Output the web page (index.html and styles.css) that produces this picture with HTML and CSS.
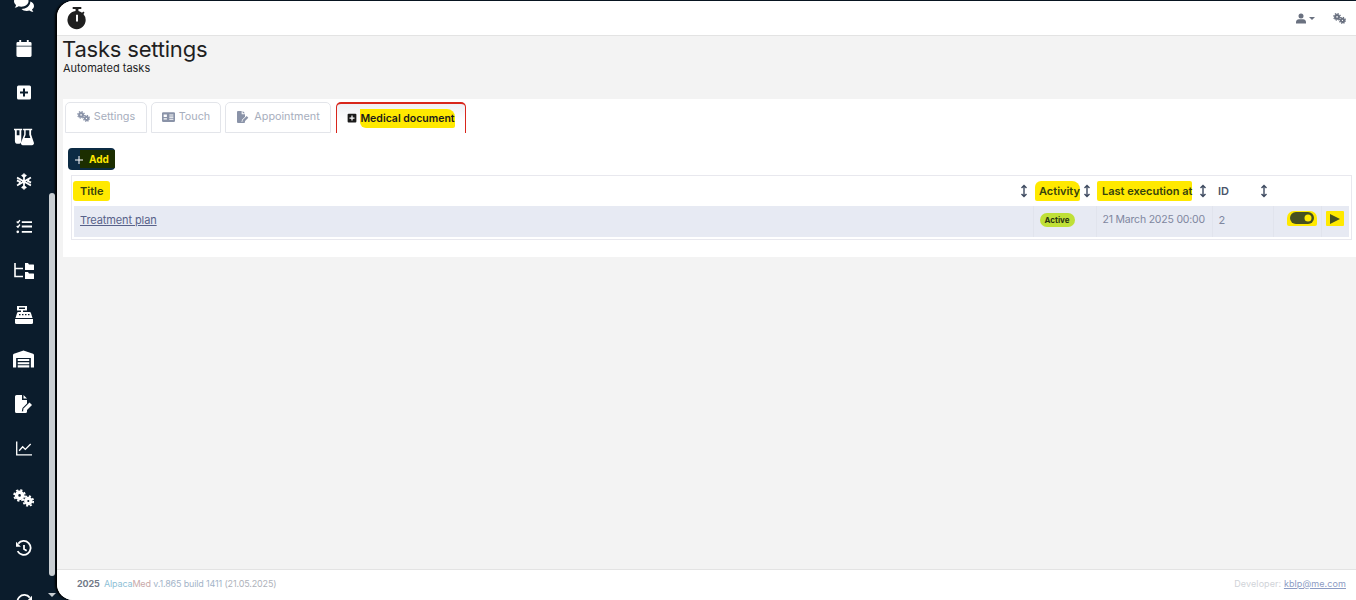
FILE: index.html
```html
<!DOCTYPE html>
<html>
<head>
    <title>Tasks settings</title>
    <link rel="stylesheet" href="styles.css">
</head>
<body>
    <svg class="icon-defs" width="0" height="0">
        <defs>
            <symbol id="i-cogs" viewBox="0 0 24 20">
                <circle cx="7.5" cy="7" r="3.5" fill="none" stroke="currentColor" stroke-width="4"/>
                <circle cx="7.5" cy="7" r="6.2" fill="none" stroke="currentColor" stroke-width="2" stroke-dasharray="2.6 2.27"/>
                <circle cx="17.5" cy="13.5" r="3" fill="none" stroke="currentColor" stroke-width="3.6"/>
                <circle cx="17.5" cy="13.5" r="5.6" fill="none" stroke="currentColor" stroke-width="2" stroke-dasharray="2.4 2"/>
            </symbol>
            <symbol id="i-plus-square" viewBox="0 0 16 16">
                <path fill="currentColor" fill-rule="evenodd" d="M2.500 1h11A1.500 1.500 0 0 1 15 2.500v11a1.500 1.500 0 0 1-1.500 1.500h-11A1.500 1.500 0 0 1 1 13.500v-11A1.500 1.500 0 0 1 2.500 1zM7 4v3H4v2h3v3h2V9h3V7H9V4z"/>
            </symbol>
            <symbol id="i-file-sign" viewBox="0 0 20 18">
                <path fill="currentColor" d="M1 1.500A1.500 1.500 0 0 1 2.500 0H8v5h5v3.500L8.500 13l-.7 3.500 3.500-.7L13 14.200v2.300a1.500 1.500 0 0 1-1.500 1.500h-9A1.500 1.500 0 0 1 1 16.500zM9.500 0 13 3.500H9.500z"/>
                <path fill="currentColor" d="M15.500 7.500l2.500 2.500-6 6-3 .5.500-3z"/>
            </symbol>
            <symbol id="i-sort" viewBox="0 0 8 14">
                <path fill="none" stroke="currentColor" stroke-width="1.400" d="M4 1.500v11M1.500 4 4 1.500 6.500 4M1.500 10 4 12.500 6.500 10"/>
            </symbol>
        </defs>
    </svg>

    <div class="sidebar">
        <div class="side-list">
            <div class="side-item">
                <svg class="side-icon side-icon-wide" viewBox="0 0 22 18"><path fill="currentColor" d="M8 0c4.400 0 8 2.700 8 6s-3.600 6-8 6c-1 0-2-.1-2.900-.4C4 12.500 2.500 13 .8 13c.7-.8 1.300-1.800 1.500-2.900C.9 9 0 7.600 0 6c0-3.300 3.600-6 8-6z"/><path fill="currentColor" d="M18 6.200c2.400.9 4 2.800 4 4.900 0 1.500-.8 2.800-2.200 3.800.2 1 .8 2 1.500 2.700-1.700 0-3.200-.5-4.300-1.400-.9.300-1.900.4-3 .4-2.400 0-4.500-.9-5.800-2.200 5.200 0 9.800-3.200 9.800-8.200z"/></svg>
            </div>
            <div class="side-item">
                <svg class="side-icon" viewBox="0 0 16 18"><path fill="currentColor" d="M3 0h2v2h6V0h2v2h1.500A1.500 1.500 0 0 1 16 3.500V6H0V3.500A1.500 1.500 0 0 1 1.500 2H3zM0 7h16v9.500a1.500 1.500 0 0 1-1.500 1.500h-13A1.500 1.500 0 0 1 0 16.500z"/></svg>
            </div>
            <div class="side-item">
                <svg class="side-icon" viewBox="0 0 16 16"><use href="#i-plus-square"/></svg>
            </div>
            <div class="side-item">
                <svg class="side-icon side-icon-wide" viewBox="0 0 22 18"><path fill="currentColor" d="M0 0h9v1.500H8V13a3.500 3.500 0 0 1-3.500 3.500A3.500 3.500 0 0 1 1 13V1.500H0zM3 1.500V7h3V1.500z" fill-rule="evenodd"/><path fill="currentColor" fill-rule="evenodd" d="M10 0h10v1.500h-1.200v4.700l3 8.800a2.200 2.200 0 0 1-2 3H9.700a2.200 2.200 0 0 1-2-3l3.500-8.800V1.500H10zM12.800 1.500v5l-1.300 3.500h6.500l-1.200-3.500v-5z"/></svg>
            </div>
            <div class="side-item">
                <svg class="side-icon" viewBox="0 0 18 18"><path fill="none" stroke="currentColor" stroke-width="2" d="M9 0v18M1.200 4.500l15.600 9M1.200 13.500l15.600-9M6.500 1.500 9 4l2.500-2.500M6.500 16.500 9 14l2.500 2.500M1 8l3.400 1L3.500 12.500M17 10l-3.400-1 .9-3.500M1.500 5.500l3 .5M16.500 12.500l-3-.5"/></svg>
            </div>
            <div class="side-item">
                <svg class="side-icon" viewBox="0 0 18 16"><path fill="none" stroke="currentColor" stroke-width="1.600" d="M.8 2.400l1.400 1.300L4.400.8M.8 7.400l1.400 1.300 2.200-2.900"/><circle fill="currentColor" cx="2" cy="14" r="1.500"/><path fill="none" stroke="currentColor" stroke-width="2" d="M6.500 3H18M6.500 8H18M6.500 14H18"/></svg>
            </div>
            <div class="side-item">
                <svg class="side-icon side-icon-wide" viewBox="0 0 20 16"><path fill="none" stroke="currentColor" stroke-width="1.600" d="M1 0v13.500h8M1 5.500h8"/><path fill="currentColor" d="M11 0h3l1 1.500h4.500a.5.500 0 0 1 .5.500v4.500a.5.500 0 0 1-.5.500h-8.500zM11 9h3l1 1.500h4.500a.5.500 0 0 1 .5.500v4.500a.5.500 0 0 1-.5.500h-8.500z"/></svg>
            </div>
            <div class="side-item">
                <svg class="side-icon side-icon-wide" viewBox="0 0 20 18"><path fill="currentColor" fill-rule="evenodd" d="M3 0h10v4.500H9V6h6.500a1.500 1.500 0 0 1 1.500 1.300L18.500 12H1.500L3 7.300A1.500 1.500 0 0 1 4.500 6H7V4.500H3zM5 1.500V3h6V1.500zM5 8v1.200h1.500V8zM8 8v1.200h1.500V8zM11 8v1.200h1.500V8zM14 8v1.200h1.500V8z"/><path fill="currentColor" d="M1 13h18v3.500a1.500 1.500 0 0 1-1.500 1.500h-15A1.500 1.500 0 0 1 1 16.500z"/></svg>
            </div>
            <div class="side-item">
                <svg class="side-icon side-icon-wider" viewBox="0 0 20 16"><path fill="currentColor" fill-rule="evenodd" d="M0 16V4.500a1.500 1.500 0 0 1 .9-1.400L10 0l9.100 3.100A1.500 1.500 0 0 1 20 4.500V16h-3V7H3v9zM4.500 8h11v2h-11zM4.500 11h11v2h-11zM4.500 14h11v2h-11z"/></svg>
            </div>
            <div class="side-item">
                <svg class="side-icon side-icon-wide" viewBox="0 0 20 18"><use href="#i-file-sign"/></svg>
            </div>
            <div class="side-item">
                <svg class="side-icon" viewBox="0 0 18 16"><path fill="none" stroke="currentColor" stroke-width="1.500" d="M.8 0v15.200H18M3.500 10.500 7.500 6l3 3L16.500 3"/></svg>
            </div>
            <div class="side-item side-item-gap">
                <svg class="side-icon side-icon-wider" viewBox="0 0 24 20"><use href="#i-cogs"/></svg>
            </div>
            <div class="side-item side-item-gap">
                <svg class="side-icon" viewBox="0 0 18 18"><path fill="none" stroke="currentColor" stroke-width="2" d="M2.500 3.500A7.800 7.800 0 1 1 1.800 12M9 5v4.500l3 2"/><path fill="currentColor" d="M0 1.500 5.500 7H0z"/></svg>
            </div>
            <div class="side-item side-item-last">
                <svg class="side-icon" viewBox="0 0 18 18"><path fill="none" stroke="currentColor" stroke-width="2" d="M15.500 3.500A7.800 7.800 0 1 0 16.200 12"/><path fill="currentColor" d="M18 1.500 12.500 7H18z"/></svg>
            </div>
        </div>
        <div class="side-thumb"></div>
        <div class="side-arrow"></div>
    </div>

    <div class="main">
        <div class="topbar">
            <svg class="logo" viewBox="0 0 20 24"><path fill="#1f1f1f" fill-rule="evenodd" d="M5.500 0h9v2H11.500v2.100a9.500 9.500 0 0 1 3.800 1.800l1.200-1.200 1.400 1.400-1.200 1.200A9.500 9.500 0 1 1 8.500 4.100V2h-3zM9 8v7h2V8z"/></svg>
            <div class="topbar-tools">
                <span class="tool">
                    <svg class="tool-user" viewBox="0 0 14 14"><circle fill="currentColor" cx="7" cy="3.500" r="3.500"/><path fill="currentColor" d="M0 14v-2c0-2.500 2-4 4-4h6c2 0 4 1.500 4 4v2z"/></svg>
                    <span class="caret"></span>
                </span>
                <svg class="tool-cogs" viewBox="0 0 24 20"><use href="#i-cogs"/></svg>
            </div>
        </div>

        <div class="content">
            <div class="page-head">
                <h1 class="page-title">Tasks settings</h1>
                <div class="page-sub">Automated tasks</div>
            </div>

            <div class="card">
                <div class="tabs">
                    <div class="tab tab-settings">
                        <svg class="tab-icon tab-icon-cogs" viewBox="0 0 24 20"><use href="#i-cogs"/></svg>Settings
                    </div>
                    <div class="tab tab-touch">
                        <svg class="tab-icon" viewBox="0 0 16 12"><path fill="currentColor" fill-rule="evenodd" d="M1.500 0h13A1.500 1.500 0 0 1 16 1.500v9a1.500 1.500 0 0 1-1.500 1.500h-13A1.500 1.500 0 0 1 0 10.500v-9A1.500 1.500 0 0 1 1.500 0zM2 3v3h4V3zM2 7.500V9h4V7.500zM9 3v1.300h5V3zM9 5.500v1.300h5V5.500zM9 8v1.300h5V8z"/></svg>Touch
                    </div>
                    <div class="tab tab-appointment">
                        <svg class="tab-icon tab-icon-file" viewBox="0 0 20 18"><use href="#i-file-sign"/></svg>Appointment
                    </div>
                    <div class="tab tab-active">
                        <svg class="tab-icon tab-icon-plus" viewBox="0 0 16 16"><use href="#i-plus-square"/></svg><span class="mark mark-tab">Medical document</span>
                    </div>
                </div>

                <div class="add-row">
                    <button class="add-button">
                        <svg class="add-plus" viewBox="0 0 8 8"><path fill="none" stroke="#fff" stroke-width="1" d="M4 0v8M0 4h8"/></svg>
                        <span class="add-label">Add</span>
                    </button>
                </div>

                <div class="table-wrap">
                    <table class="tasks">
                        <colgroup>
                            <col class="col-title">
                            <col class="col-activity">
                            <col class="col-date">
                            <col class="col-id">
                            <col class="col-toggle">
                            <col class="col-run">
                        </colgroup>
                        <thead>
                            <tr>
                                <th><span class="mark mark-title">Title</span><svg class="sort" viewBox="0 0 8 14"><use href="#i-sort"/></svg></th>
                                <th><span class="mark mark-activity">Activity</span><svg class="sort" viewBox="0 0 8 14"><use href="#i-sort"/></svg></th>
                                <th><span class="mark mark-date">Last execution at</span><svg class="sort" viewBox="0 0 8 14"><use href="#i-sort"/></svg></th>
                                <th class="th-plain">ID<svg class="sort" viewBox="0 0 8 14"><use href="#i-sort"/></svg></th>
                                <th></th>
                                <th></th>
                            </tr>
                        </thead>
                        <tbody>
                            <tr>
                                <td><a class="task-link" href="#">Treatment plan</a></td>
                                <td><span class="badge">Active</span></td>
                                <td class="td-date">21 March 2025 00:00</td>
                                <td>2</td>
                                <td class="td-action">
                                    <span class="mark-icon">
                                        <svg class="toggle" viewBox="0 0 24 12"><rect width="24" height="12" rx="6" fill="#465020"/><circle cx="18" cy="6" r="3.500" fill="#ffe900"/></svg>
                                    </span>
                                </td>
                                <td class="td-action">
                                    <span class="mark-icon mark-run">
                                        <svg class="run" viewBox="0 0 10 10"><path fill="#465020" d="M0 0l10 5-10 5z"/></svg>
                                    </span>
                                </td>
                            </tr>
                        </tbody>
                    </table>
                </div>
            </div>
        </div>

        <div class="footer">
            <div>
                <span class="foot-year">2025</span>
                <span class="foot-alpaca">Alpaca</span><span class="foot-med">Med</span>
                <span class="foot-version">v.1.865 build 1411</span>
                <span class="foot-date">(21.05.2025)</span>
            </div>
            <div class="foot-dev">Developer: <a class="foot-mail" href="#">kblp@me.com</a></div>
        </div>
    </div>
</body>
</html>
```

FILE: styles.css
```css
html,
body {
    height: 100%;
}

body {
    margin: 0;
    display: flex;
    overflow: hidden;
    background: #0b1c2c;
    font-family: Inter, "Liberation Sans", sans-serif;
    font-size: 11px;
    color: #1f1f1f;
}

.icon-defs {
    position: absolute;
}

/* left menu */
.sidebar {
    position: relative;
    width: 57px;
    flex: none;
    overflow: hidden;
}

.side-list {
    margin-top: -18px;
    padding-right: 10px;
    color: #fff;
}

.side-item {
    height: 44.4px;
    display: flex;
    align-items: center;
    justify-content: center;
}

.side-item-gap {
    margin-top: 6px;
}

.side-item-last {
    margin-top: 9px;
}

.side-icon {
    width: 16px;
    height: 17px;
}

.side-icon-wide {
    width: 20px;
    height: 18px;
}

.side-icon-wider {
    width: 21px;
    height: 18px;
}

.side-thumb {
    position: absolute;
    left: 49px;
    top: 193px;
    width: 6px;
    height: 383px;
    border-radius: 3px;
    background: #c9ced2;
}

.side-arrow {
    position: absolute;
    left: 48px;
    top: 593px;
    border-left: 4px solid transparent;
    border-right: 4px solid transparent;
    border-top: 4px solid #c9ced2;
}

/* main column */
.main {
    flex: 1;
    min-width: 0;
    margin-top: 1px;
    display: flex;
    flex-direction: column;
    background: #f3f3f3;
    border-radius: 16px 0 0 16px;
    overflow: hidden;
    box-shadow: -2px 0 2px #000;
}

.topbar {
    height: 34px;
    flex: none;
    display: flex;
    align-items: center;
    justify-content: space-between;
    padding: 0 10px 0 10px;
    background: #fff;
    border-bottom: 1px solid #e3e3e3;
}

.logo {
    width: 20px;
    height: 23px;
}

.topbar-tools {
    display: flex;
    align-items: center;
    gap: 18px;
    color: #6a7180;
}

.tool {
    display: flex;
    align-items: center;
    gap: 3px;
}

.tool-user {
    width: 10px;
    height: 11px;
}

.caret {
    border-left: 3px solid transparent;
    border-right: 3px solid transparent;
    border-top: 3px solid #6a7180;
}

.tool-cogs {
    width: 13px;
    height: 11px;
}

.content {
    flex: 1;
    min-height: 0;
}

.page-head {
    height: 63px;
    box-sizing: border-box;
    padding: 0 6px;
}

.page-title {
    margin: 0 0 0 -1px;
    font-size: 22px;
    font-weight: 400;
    letter-spacing: -.2px;
    line-height: 26px;
}

.page-sub {
    font-size: 11px;
    line-height: 12px;
}

.card {
    background: #fff;
    height: 158px;
    box-sizing: border-box;
    margin-left: 6px;
    padding: 3px 4px 0 2px;
}

/* tabs */
.tabs {
    display: flex;
    gap: 4px;
}

.tab {
    height: 31px;
    box-sizing: border-box;
    display: flex;
    align-items: center;
    justify-content: center;
    gap: 4px;
    padding-bottom: 2px;
    border: 1px solid #e3e5ea;
    border-radius: 5px 5px 0 0;
    color: #a7aebd;
    font-size: 10.800px;
}

.tab-settings {
    width: 82px;
}

.tab-touch {
    width: 70px;
}

.tab-appointment {
    width: 106px;
}

.tab-active {
    width: 130px;
    margin-left: 1px;
    gap: 3px;
    padding-bottom: 1px;
    border: 1px solid #d8261c;
    border-top-width: 2px;
    border-bottom: 0;
    background: linear-gradient(#eef0f5, #fff 60%);
    color: #1a1a1a;
    font-size: 10.500px;
    font-weight: 600;
}

.tab-icon {
    width: 13px;
    height: 10px;
    color: #8a93a8;
}

.tab-icon-cogs {
    width: 13px;
    height: 11px;
}

.tab-icon-file {
    width: 14px;
    height: 12px;
}

.tab-icon-plus {
    width: 10px;
    height: 10px;
    color: #1a1a1a;
}

/* yellow marker strokes */
.mark {
    background: #ffe900;
    color: #36420e;
    border-radius: 2px;
    font-weight: 600;
    padding: 3px 0;
}

.mark-tab {
    color: #1a1a1a;
    border-radius: 0 8px 2px 6px;
}

.mark-title {
    padding: 3px 7px 3px 7px;
    margin-left: -7px;
    border-radius: 3px;
}

.mark-activity {
    padding-left: 4px;
    margin-left: -4px;
    border-radius: 6px 8px 2px 2px;
}

.mark-date {
    padding-left: 5px;
    margin-left: -5px;
}

.add-row {
    padding: 15px 0 5px 3px;
}

.add-button {
    display: flex;
    align-items: center;
    width: 47px;
    height: 22px;
    padding: 0;
    border: 0;
    border-radius: 4px;
    overflow: hidden;
    background: #0c2b44;
    font-family: inherit;
    font-size: 10px;
    font-weight: 700;
}

.add-plus {
    position: relative;
    width: 8px;
    height: 8px;
    margin: 1px -3px 0 7px;
    flex: none;
}

.add-label {
    flex: 1;
    height: 18px;
    line-height: 18px;
    padding-left: 9px;
    text-align: left;
    background: #1c2e00;
    color: #ffe900;
}

/* task table */
.table-wrap {
    margin-left: 6px;
    padding: 1px 2px 2px;
    border: 1px solid #e8e8ee;
}

.tasks {
    width: 100%;
    table-layout: fixed;
    border-collapse: collapse;
}

.col-activity {
    width: 63px;
}

.col-date {
    width: 116px;
}

.col-id {
    width: 61px;
}

.col-toggle {
    width: 48px;
}

.col-run {
    width: 28px;
}

.tasks th {
    position: relative;
    height: 29px;
    padding: 0 6px 2px;
    box-sizing: border-box;
    text-align: left;
    font-size: 11px;
    font-weight: 600;
    color: #36420e;
    white-space: nowrap;
}

.tasks th.th-plain {
    color: #4a5468;
}

.sort {
    position: absolute;
    right: 5px;
    top: 7px;
    width: 8px;
    height: 14px;
    color: #3e4a60;
}

.tasks td {
    height: 31px;
    padding: 0 6px 4px;
    box-sizing: border-box;
    background: #e7eaf3;
    border-left: 1px solid #e1e4ed;
    color: #7f87a0;
    font-size: 11px;
    white-space: nowrap;
}

.tasks td:first-child {
    border-left: 0;
}

.tasks td.td-date {
    font-size: 10.500px;
    letter-spacing: -.2px;
}

.tasks .td-action {
    padding: 0 0 5px;
    text-align: right;
}

.task-link {
    color: #58628a;
    letter-spacing: -.1px;
}

.badge {
    display: inline-block;
    padding: 2px 5px;
    border-radius: 7px;
    background: #bfe037;
    color: #2a3310;
    font-size: 8px;
    font-weight: 700;
}

.mark-icon {
    display: inline-flex;
    align-items: center;
    justify-content: center;
    width: 30px;
    height: 15px;
    margin-right: 4px;
    background: #ffe900;
    border-radius: 7px 7px 2px 2px;
}

.mark-run {
    width: 18px;
    margin-right: 5px;
    border-radius: 1px;
}

.toggle {
    width: 24px;
    height: 12px;
}

.run {
    width: 10px;
    height: 10px;
}

/* footer */
.footer {
    height: 31px;
    flex: none;
    box-sizing: border-box;
    display: flex;
    align-items: center;
    justify-content: space-between;
    padding: 0 10px 3px 20px;
    background: #fff;
    border-top: 1px solid #e3e3e3;
    font-size: 9px;
    letter-spacing: -.15px;
}

.foot-year {
    font-weight: 700;
    color: #737a88;
    margin-right: 2px;
}

.foot-alpaca {
    color: #8fbfd6;
}

.foot-med {
    color: #c9a9a9;
}

.foot-version {
    color: #a3b4c8;
}

.foot-date {
    color: #aeb2ba;
}

.foot-dev {
    color: #d0d3d8;
    letter-spacing: .1px;
}

.foot-mail {
    color: #8d9cc4;
}
```
